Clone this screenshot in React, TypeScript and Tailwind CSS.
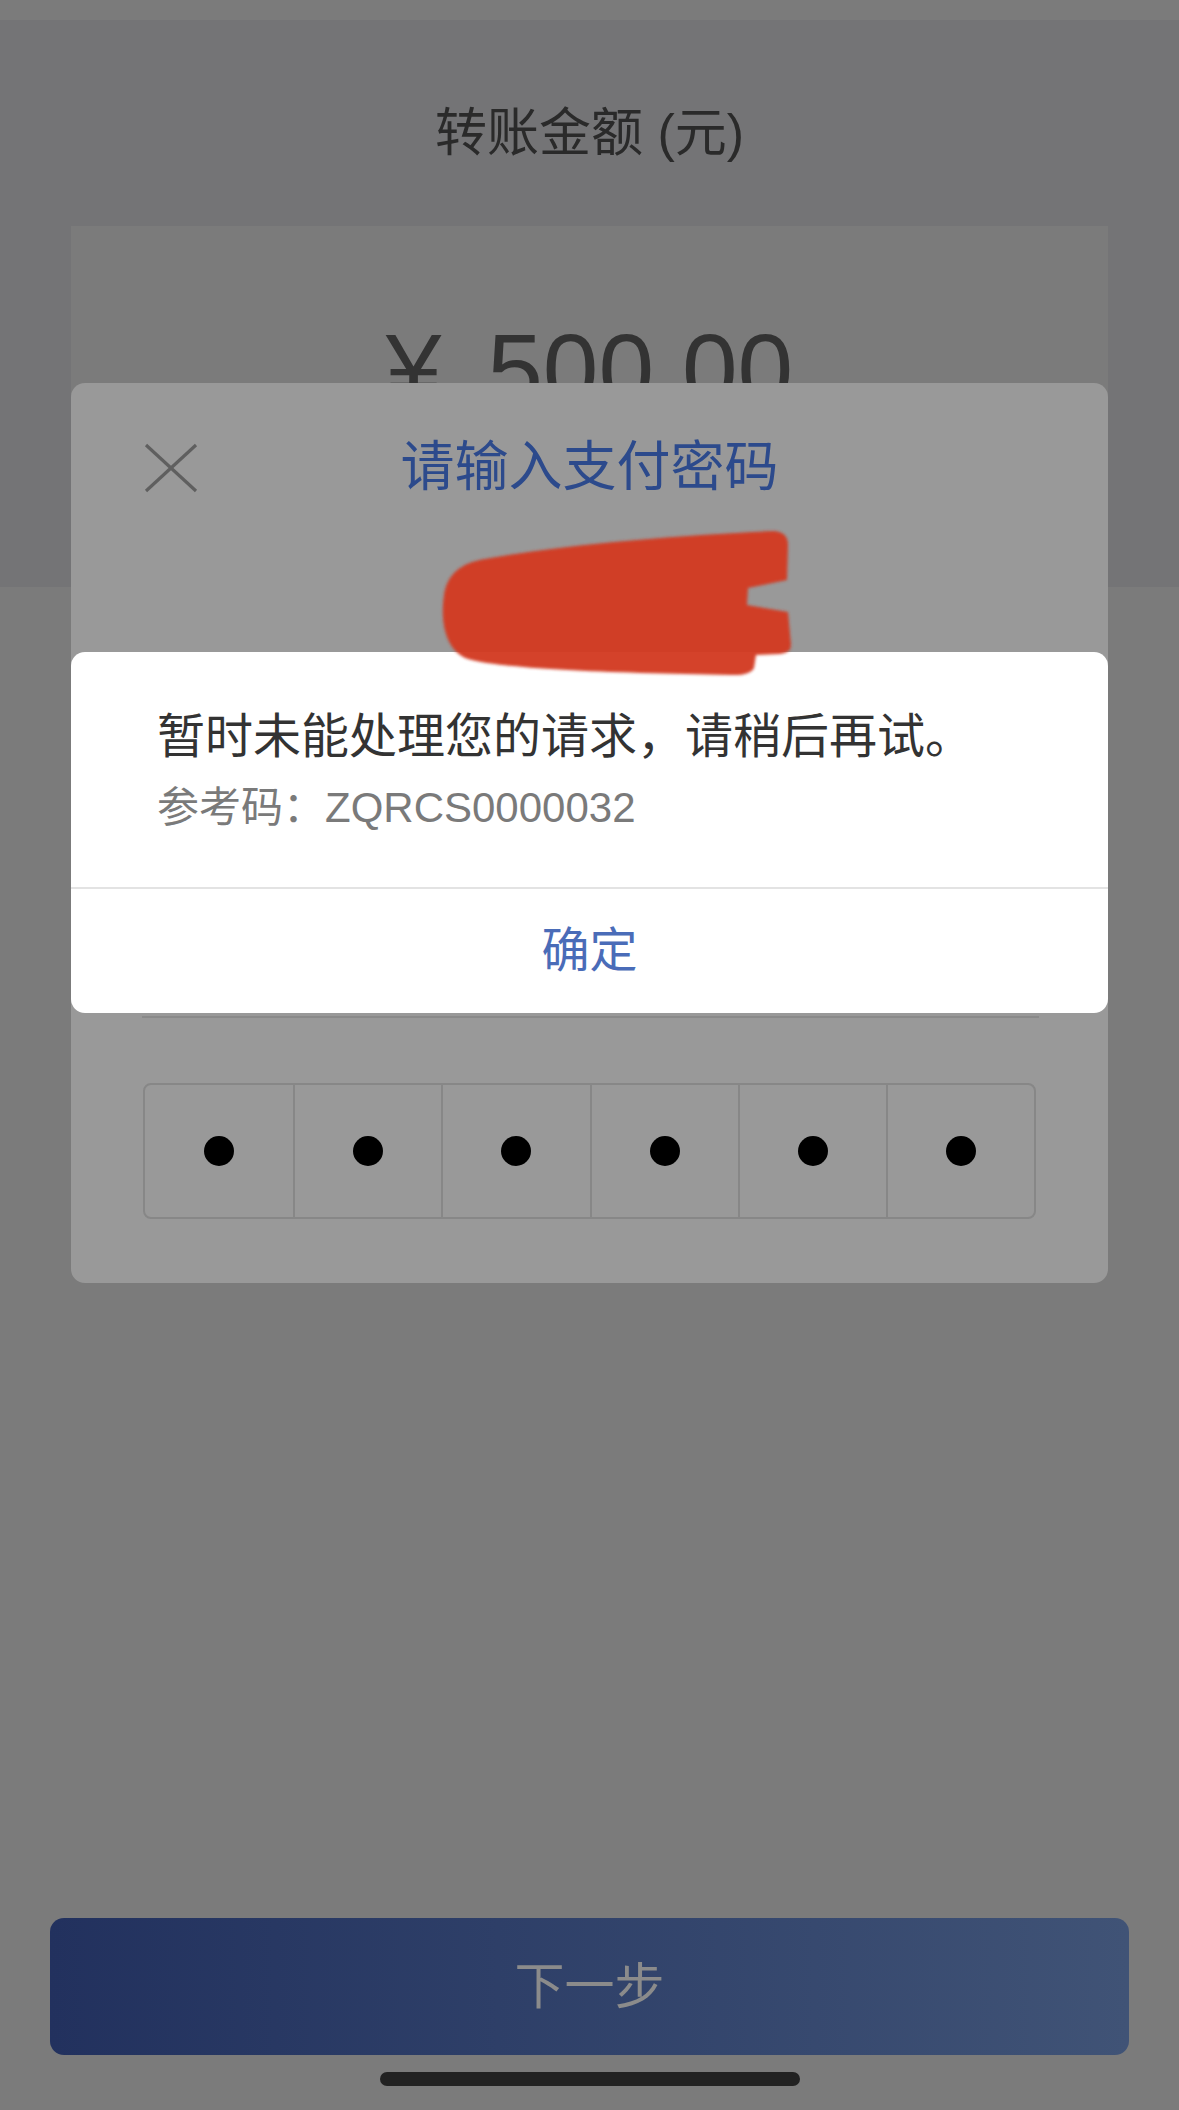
import React from "react";

const FONT = "font-['Liberation_Sans','Noto_Sans_CJK_SC',sans-serif]";

function CloseIcon() {
  return (
    <svg width="54" height="50" viewBox="0 0 54 50" fill="none">
      <line x1="2" y1="2" x2="52" y2="48" stroke="#5f5f5f" strokeWidth="3.2" />
      <line x1="52" y1="2" x2="2" y2="48" stroke="#5f5f5f" strokeWidth="3.2" />
    </svg>
  );
}

function Scribble() {
  return (
    <svg
      className="absolute left-[436px] top-[522px] pointer-events-none"
      width="364"
      height="160"
      viewBox="436 522 364 160"
    >
      <defs>
        <filter id="soft" x="-5%" y="-5%" width="110%" height="110%">
          <feGaussianBlur stdDeviation="1.6" />
        </filter>
      </defs>
      <path
        filter="url(#soft)"
        fill="#d33b22"
        opacity="0.96"
        d="M485,559 C560,545 680,535 774,531 Q788,532 788,545 L787,580 L748,588 L747,605 L788,612 L791,645 Q791,653 780,654 L756,655 L754,668 Q750,676 730,675 L640,673 C560,671 490,666 468,659 C445,651 440,620 444,595 C447,575 460,563 485,559 Z"
      />
    </svg>
  );
}

export default function App() {
  const dots = [0, 1, 2, 3, 4, 5];
  return (
    <div className={`relative w-[1179px] h-[2110px] overflow-hidden bg-[#7b7b7b] flex flex-col ${FONT}`}>
      {/* status bar strip */}
      <div className="h-[20px] bg-[#7b7b7b]" />

      {/* header section */}
      <div className="h-[567px] bg-[#747476] flex flex-col">
        <div className="pt-[87px] text-center text-[52px] leading-[52px] text-[#2a2a2a]">
          转账金额 (元)
        </div>
        <div className="mt-[67px] mx-[71px] h-[361px] bg-[#7b7b7b] pt-[93px] text-center">
          <div className="text-[100px] leading-[100px] text-[#333333] [word-spacing:18px]">
            ¥ 500.00
          </div>
        </div>
      </div>

      {/* rest of page */}
      <div className="flex-1" />
      <div className="mx-[50px] h-[137px] rounded-[14px] bg-gradient-to-r from-[#22315e] to-[#405376] flex items-center justify-center">
        <span className="text-[50px] leading-[50px] text-[#8b8b8b]">下一步</span>
      </div>
      <div className="mt-[17px] mb-[24px] flex justify-center">
        <div className="w-[420px] h-[14px] rounded-full bg-[#222222]" />
      </div>

      {/* password modal (dimmed) */}
      <div className="absolute left-[71px] top-[383px] w-[1037px] h-[900px] rounded-[14px] bg-[#999999]">
        <div className="absolute left-[73px] top-[60px]">
          <CloseIcon />
        </div>
        <div className="pt-[57px] text-center text-[54px] leading-[54px] text-[#2c4a8c]">
          请输入支付密码
        </div>
        <div className="absolute left-[71px] right-[69px] top-[633px] h-[2px] bg-[#8a8a8a]" />
        <div className="absolute left-[72px] top-[700px] w-[893px] h-[136px] rounded-[8px] border-2 border-[#878787] grid grid-cols-6">
          {dots.map((i) => (
            <div
              key={i}
              className={`flex items-center justify-center ${i > 0 ? "border-l-2 border-[#878787]" : ""}`}
            >
              <div className="w-[30px] h-[30px] rounded-full bg-black" />
            </div>
          ))}
        </div>
      </div>

      {/* error alert */}
      <div className="absolute left-[71px] top-[652px] w-[1037px] h-[361px] rounded-[14px] bg-white flex flex-col">
        <div className="pt-[61px] px-[86px]">
          <div className="text-[48px] leading-[48px] text-[#333333]">
            暂时未能处理您的请求，请稍后再试。
          </div>
          <div className="mt-[26px] text-[42px] leading-[42px] text-[#7a7a7a]">
            参考码：ZQRCS0000032
          </div>
        </div>
        <div className="mt-auto h-[2px] bg-[#e3e3e3]" />
        <div className="h-[124px] flex items-center justify-center">
          <span className="text-[48px] leading-[48px] text-[#4a6cb8]">确定</span>
        </div>
      </div>

      <Scribble />
    </div>
  );
}
